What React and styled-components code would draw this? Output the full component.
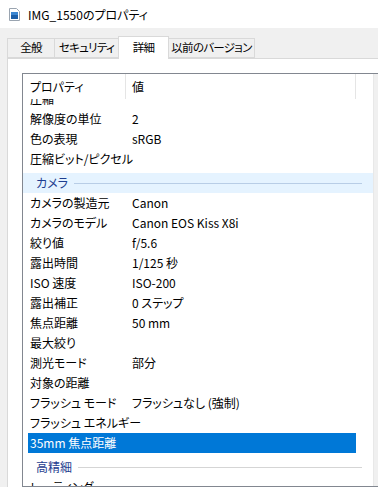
import React from "react";
import styled, { createGlobalStyle } from "styled-components";

const GlobalStyle = createGlobalStyle`
    html, body {
        margin: 0;
        padding: 0;
        background: #f0f0f0;
    }
    body {
        font-family: "Noto Sans CJK JP", "Noto Sans", sans-serif;
        font-size: 12px;
        color: #000;
        font-feature-settings: "palt";
    }
`;

const rows = [
    { name: "圧縮", value: "" },
    { name: "解像度の単位", value: "2" },
    { name: "色の表現", value: "sRGB" },
    { name: "圧縮ビット/ピクセル", value: "" },
    { group: "カメラ", hover: true },
    { name: "カメラの製造元", value: "Canon" },
    { name: "カメラのモデル", value: "Canon EOS Kiss X8i" },
    { name: "絞り値", value: "f/5.6" },
    { name: "露出時間", value: "1/125 秒" },
    { name: "ISO 速度", value: "ISO-200" },
    { name: "露出補正", value: "0 ステップ" },
    { name: "焦点距離", value: "50 mm" },
    { name: "最大絞り", value: "" },
    { name: "測光モード", value: "部分" },
    { name: "対象の距離", value: "" },
    { name: "フラッシュ モード", value: "フラッシュなし (強制)" },
    { name: "フラッシュ エネルギー", value: "" },
    { name: "35mm 焦点距離", value: "", selected: true },
    { group: "高精細" },
    { name: "レーティング", value: "" },
];

const tabs = [
    { label: "全般", width: 48 },
    { label: "セキュリティ", width: 65 },
    { label: "詳細", width: 51, active: true },
    { label: "以前のバージョン", width: 87 },
];

const App = () => {
    return (
        <>
            <GlobalStyle />
            <Window>
                <TitleBar>
                    <FileIcon />
                    <span>IMG_1550のプロパティ</span>
                </TitleBar>
                <Body>
                    <TabStrip>
                        {tabs.map((t) => (
                            <Tab key={t.label} active={t.active} $w={t.width}>{t.label}</Tab>
                        ))}
                    </TabStrip>
                    <Panel>
                        <ListBox>
                            <ListContent>
                                <Header>
                                    <HeaderCell>プロパティ</HeaderCell>
                                    <HeaderCell>値</HeaderCell>
                                    <div />
                                </Header>
                                <RowsViewport>
                                    <Rows>
                                        {rows.map((r, i) =>
                                            r.group ? (
                                                <Group key={i}>
                                                    <GroupBar hover={r.hover}>
                                                        <GroupLabel>{r.group}</GroupLabel>
                                                        <GroupLine hover={r.hover} />
                                                    </GroupBar>
                                                </Group>
                                            ) : (
                                                <Row key={i} selected={r.selected}>
                                                    <NameCell>{r.name}</NameCell>
                                                    <span>{r.value}</span>
                                                </Row>
                                            )
                                        )}
                                    </Rows>
                                </RowsViewport>
                            </ListContent>
                            <ScrollTrack>
                                <Thumb />
                            </ScrollTrack>
                        </ListBox>
                    </Panel>
                </Body>
            </Window>
        </>
    );
};

const FileIcon = () => (
    <svg width="11" height="13" viewBox="0 0 11 13">
        <path d="M0.5 0.5 H7.5 L10.5 3.5 V12.5 H0.5 Z" fill="#fff" stroke="#9aa4b0" />
        <rect x="2" y="4" width="7" height="7" fill="#1c5fa8" />
        <rect x="2" y="4" width="7" height="3" fill="#3b86d1" />
    </svg>
);

export default App;

const Window = styled.div`
    width: 378px;
    height: 487px;
    overflow: hidden;
    display: flex;
    flex-direction: column;
    background: #f0f0f0;
`;

const TitleBar = styled.div`
    height: 28px;
    flex: none;
    background: #fff;
    display: flex;
    align-items: center;
    gap: 8px;
    padding-left: 9px;
    font-size: 12px;
    color: #000;
`;

const Body = styled.div`
    flex: 1;
    min-height: 0;
    display: flex;
    flex-direction: column;
    padding: 8px 0 0 7px;
`;

const TabStrip = styled.div`
    display: flex;
    align-items: flex-end;
    height: 22px;
    flex: none;
`;

const Tab = styled.div`
    box-sizing: border-box;
    width: ${(p) => p.$w}px;
    height: ${(p) => (p.active ? "23px" : "20px")};
    margin-bottom: ${(p) => (p.active ? "-1px" : "0")};
    background: ${(p) => (p.active ? "#fff" : "#f0f0f0")};
    border: 1px solid #d9d9d9;
    border-bottom: ${(p) => (p.active ? "none" : "1px solid #d9d9d9")};
    margin-left: -1px;
    display: flex;
    align-items: center;
    justify-content: center;
    white-space: nowrap;
    font-size: 11.5px;
    letter-spacing: -0.7px;
    line-height: 1;
    position: relative;
    z-index: ${(p) => (p.active ? 1 : 0)};
    &:first-child {
        margin-left: 0;
    }
`;

const Panel = styled.div`
    flex: 1;
    min-height: 0;
    background: #fff;
    border-top: 1px solid #d9d9d9;
    border-left: 1px solid #d9d9d9;
    padding: 14px 0 0 14px;
`;

const ListBox = styled.div`
    display: flex;
    width: 369px;
    height: 412px;
    border: 1px solid #828790;
    background: #fff;
`;

const ListContent = styled.div`
    width: 350px;
    display: flex;
    flex-direction: column;
    min-height: 0;
`;

const Header = styled.div`
    display: grid;
    grid-template-columns: 103px 230px 1fr;
    height: 25px;
    flex: none;
    position: relative;
    z-index: 1;
    background: #fff;
`;

const HeaderCell = styled.div`
    display: flex;
    align-items: center;
    padding-left: 7px;
    border-right: 1px solid #e5e5e5;
    &:nth-child(2) {
        padding-left: 6px;
    }
`;

const RowsViewport = styled.div`
    flex: 1;
    min-height: 0;
    overflow: hidden;
`;

const Rows = styled.div`
    margin-top: -10px;
`;

const Row = styled.div`
    display: grid;
    grid-template-columns: 104px 1fr;
    width: 328px;
    height: 20px;
    line-height: 20px;
    margin-left: 5px;
    white-space: nowrap;
    background: ${(p) => (p.selected ? "#0078d7" : "transparent")};
    color: ${(p) => (p.selected ? "#fff" : "#000")};
`;

const NameCell = styled.span`
    padding-left: 2px;
    overflow: visible;
`;

const Group = styled.div`
    height: 24px;
    padding-top: 4px;
    box-sizing: border-box;
`;

const GroupBar = styled.div`
    height: 20px;
    display: flex;
    align-items: center;
    gap: 6px;
    padding: 0 11px 0 13px;
    background: ${(p) => (p.hover ? "#e5f3ff" : "transparent")};
`;

const GroupLabel = styled.span`
    color: #1e3d8f;
    line-height: 20px;
`;

const GroupLine = styled.div`
    flex: 1;
    height: 1px;
    margin-top: 1px;
    background: ${(p) => (p.hover ? "#b8cde6" : "#d5d5d5")};
`;

const ScrollTrack = styled.div`
    width: 17px;
    background: #f0f0f0;
    border-left: 1px solid #e8e8e8;
    display: flex;
    flex-direction: column;
    align-items: center;
`;

const Thumb = styled.div`
    width: 8px;
    height: 117px;
    margin-top: 131px;
    margin-left: 3px;
    background: #a9a9a9;
`;
